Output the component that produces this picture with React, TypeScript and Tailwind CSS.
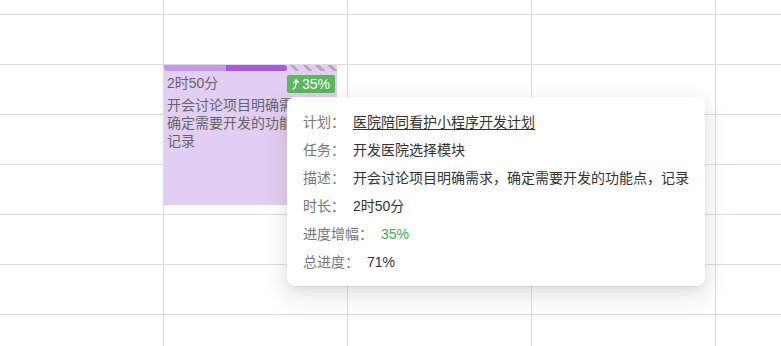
const rows = [15, 50, 50, 50, 50, 50, 50, 50];
const cols = ["w-[164px]", "w-[184px]", "w-[184px]", "w-[184px]", "flex-1"];

const details = [
  { label: "计划：", value: "医院陪同看护小程序开发计划", underline: true },
  { label: "任务：", value: "开发医院选择模块" },
  { label: "描述：", value: "开会讨论项目明确需求，确定需要开发的功能点，记录" },
  { label: "时长：", value: "2时50分" },
  { label: "进度增幅：", value: "35%", green: true },
  { label: "总进度：", value: "71%" },
];

function RiseArrow() {
  return (
    <svg width="8" height="12" viewBox="0 0 8 12" fill="none">
      <path d="M1 11 C3 10.5 4.2 8 4.2 2.5" stroke="white" strokeWidth="1.4" strokeLinecap="round" />
      <path d="M1.8 4.6 L4.2 1.6 L6.6 4.6" stroke="white" strokeWidth="1.4" strokeLinecap="round" strokeLinejoin="round" />
    </svg>
  );
}

export default function App() {
  const total = 71;
  const gain = 35;

  return (
    <div
      className="relative h-[346px] w-[781px] overflow-hidden bg-white"
      style={{ fontFamily: '"Liberation Sans", "Noto Sans CJK SC", sans-serif' }}
    >
      {/* calendar grid */}
      <div className="flex flex-col">
        {rows.map((h, i) => (
          <div
            key={i}
            className={`flex border-b border-[#dddddd] ${h === 15 ? "h-[15px]" : "h-[50px]"}`}
          >
            {cols.map((c, j) => (
              <div key={j} className={`${c} ${j < 4 ? "border-r border-[#dddddd]" : ""}`} />
            ))}
          </div>
        ))}
      </div>

      {/* event card */}
      <div className="absolute left-[164px] top-[65px] h-[140px] w-[173px] overflow-hidden bg-[#e2cef3]">
        <div className="h-[6px] w-full bg-[repeating-linear-gradient(45deg,transparent_0_3px,#b4abb9_3px_6px,transparent_6px_9px)]">
          <div className="flex h-full overflow-hidden rounded-full" style={{ width: `${total}%` }}>
            <div className="h-full bg-[#c39ae8]" style={{ width: `${((total - gain) / total) * 100}%` }} />
            <div className="h-full flex-1 bg-[#a35bdb]" />
          </div>
        </div>
        <div className="mt-[3px] flex h-[19px] items-center justify-between pl-[3px] pr-[2px]">
          <span className="text-[14px] leading-[19px] text-[#666666]">2时50分</span>
          <span className="flex h-[18px] items-center gap-[2px] rounded-[2px] bg-[#5cb85c] px-[5px] text-[14px] leading-[18px] text-white">
            <RiseArrow />
            35%
          </span>
        </div>
        <p className="mt-[3px] px-[3px] text-[14px] leading-[18px] text-[#666666]">
          开会讨论项目明确需求，确定需要开发的功能点，记录
        </p>
      </div>

      {/* tooltip */}
      <div className="absolute left-[287px] top-[97px] w-[418px] rounded-[8px] bg-white pb-[10px] pl-[16px] pt-[11px] shadow-[0_6px_16px_0_rgba(0,0,0,0.08),0_3px_6px_-4px_rgba(0,0,0,0.12),0_9px_28px_8px_rgba(0,0,0,0.05)]">
        {details.map((d) => (
          <div key={d.label} className="flex h-[28px] items-center text-[14px] leading-[20px]">
            <span className="text-[#777777]">{d.label}</span>
            <span
              className={`ml-[8px] ${d.green ? "text-[#3aae4f]" : "text-[#333333]"} ${d.underline ? "underline underline-offset-2" : ""}`}
            >
              {d.value}
            </span>
          </div>
        ))}
      </div>
    </div>
  );
}
